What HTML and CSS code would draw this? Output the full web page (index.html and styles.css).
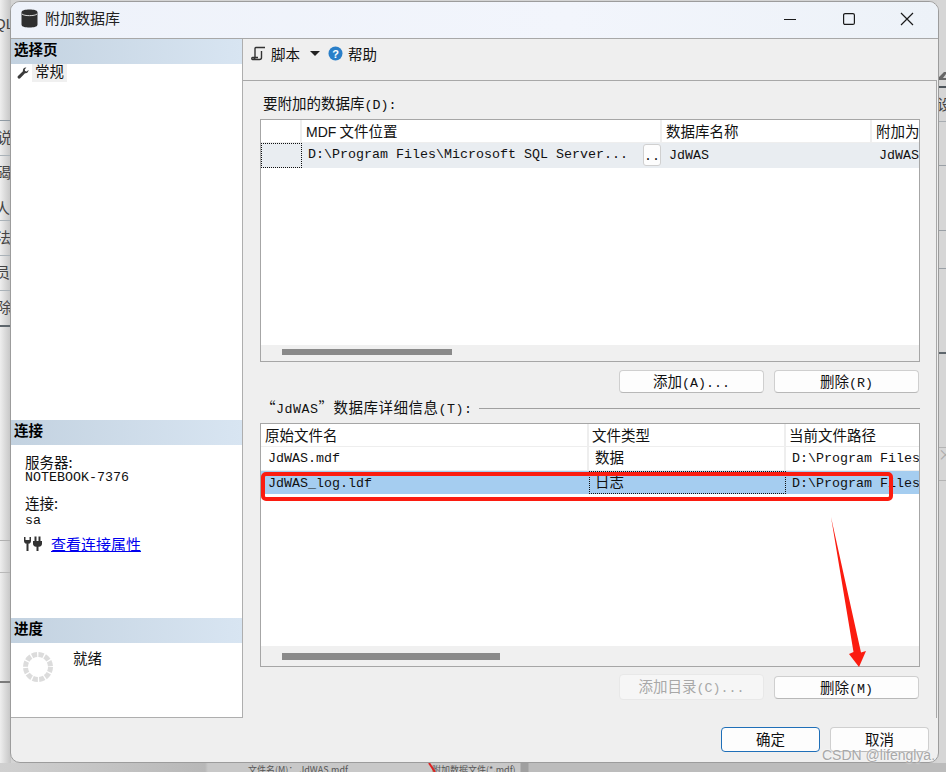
FILE: index.html
```html
<!DOCTYPE html>
<html lang="zh-CN">
<head>
    <meta charset="UTF-8">
    <title>附加数据库</title>
    <link rel="stylesheet" href="styles.css">
</head>
<body>
    <div id="desk">
        <div class="desk-left">
            <span class="frag frag-ql">QL</span>
            <span class="frag frag-l1">说</span>
            <span class="frag frag-l2">碣</span>
            <span class="frag frag-l3">人)</span>
            <span class="frag frag-l4">法</span>
            <span class="frag frag-l5">员</span>
            <span class="frag frag-l6">除</span>
        </div>
        <div class="desk-right">
            <svg class="desk-icon" width="9" height="15" viewBox="0 0 9 15"><path d="M1 10L7 4H9V6L6 10H9V12H1Z" fill="#666"/></svg>
            <span class="frag frag-r1">设</span>
            <span class="frag frag-r2">×</span>
        </div>
        <div class="desk-bottom">
            <span class="frag-file">文件名(M)： JdWAS.mdf</span>
            <span class="frag-file frag-file2">附加数据文件(*.mdf)</span>
            <svg class="desk-arrow" width="10" height="9" viewBox="0 0 10 9"><path d="M1 0L7 9" stroke="#d22" stroke-width="2"/></svg>
        </div>
    </div>

    <div id="window">
        <div class="titlebar">
            <svg class="db-icon" width="17" height="19" viewBox="0 0 17 19">
                <path d="M0.5 3.5C0.5 1.3 4 0.5 8.5 0.5S16.5 1.3 16.5 3.5V15.5C16.5 17.7 13 18.5 8.5 18.5S0.5 17.7 0.5 15.5Z" fill="#2f2f2f"/>
                <path d="M1 5C3 7.2 14 7.2 16 5" fill="none" stroke="#dcdcdc" stroke-width="1"/>
            </svg>
            <span class="title-text">附加数据库</span>
            <div class="win-controls">
                <svg width="14" height="14" viewBox="0 0 14 14"><path d="M1 7.5H13" stroke="#1a1a1a" stroke-width="1.2"/></svg>
                <svg width="14" height="14" viewBox="0 0 14 14"><rect x="1.6" y="1.6" width="10.8" height="10.8" rx="1.5" fill="none" stroke="#1a1a1a" stroke-width="1.2"/></svg>
                <svg width="14" height="14" viewBox="0 0 14 14"><path d="M1 1L13 13M13 1L1 13" stroke="#1a1a1a" stroke-width="1.2"/></svg>
            </div>
        </div>

        <div class="main">
            <div class="side">
                <div class="side-section sec-pages">
                    <div class="side-head">选择页</div>
                    <div class="page-item">
                        <svg width="12" height="12" viewBox="0 0 12 12"><path d="M11.5 2.8C11.7 4.8 10 6.6 8 6.2L3.2 11.2C2.6 11.8 1.6 11.8 1 11.2C0.4 10.6 0.4 9.7 1 9.1L5.9 4.2C5.5 2.2 7.2 0.3 9.4 0.6L7.7 2.4L8.1 4.1L9.8 4.5Z" fill="#3a3a3a"/></svg>
                        <span class="page-name">常规</span>
                    </div>
                </div>
                <div class="side-section sec-conn">
                    <div class="side-head">连接</div>
                    <div class="conn-info">
                        <div class="conn-line">服务器:</div>
                        <div class="conn-line latin">NOTEBOOK-7376</div>
                        <div class="conn-line conn-gap">连接:</div>
                        <div class="conn-line conn-user latin">sa</div>
                        <div class="conn-link-row">
                            <svg width="20" height="16" viewBox="0 0 20 16">
                                <path d="M1 1V5C1 7 2.5 8 4.5 8C6.5 8 8 7 8 5V1H6.5V4H2.5V1Z" fill="#333"/>
                                <path d="M3.5 8H5.5V15H3.5Z" fill="#333"/>
                                <path d="M10 5H19V8C19 10 17 11 14.5 11C12 11 10 10 10 8Z" fill="#333"/>
                                <path d="M11.5 0.5H13.5V5H11.5ZM15.5 0.5H17.5V5H15.5ZM13.5 11H15.5V15H13.5Z" fill="#333"/>
                            </svg>
                            <a class="conn-link" href="#">查看连接属性</a>
                        </div>
                    </div>
                </div>
                <div class="side-section sec-progress">
                    <div class="side-head">进度</div>
                    <div class="progress-body">
                        <svg class="spinner" width="30" height="30" viewBox="0 0 30 30"><circle cx="15" cy="15" r="12.5" fill="none" stroke="#dcdcdc" stroke-width="5" stroke-dasharray="5.2 1.35"/></svg>
                        <span class="progress-text">就绪</span>
                    </div>
                </div>
            </div>

            <div class="content">
                <div class="toolbar">
                    <svg width="15" height="15" viewBox="0 0 15 15"><path d="M5 1.5H14M5 1.5C4 1.5 4 2.5 4 3V11.5C4 13 3 13.5 1.5 13.5H8.5C10 13.5 10.5 12.5 10.5 11.5V5M1.5 13.5C0.5 13.5 0.5 11.5 1.5 11.5H7" fill="none" stroke="#333" stroke-width="1.4"/></svg>
                    <span class="tool-text">脚本</span>
                    <span class="caret"></span>
                    <svg class="help-icon" width="15" height="15" viewBox="0 0 15 15">
                        <circle cx="7.5" cy="7.5" r="7" fill="#2a7fc9"/>
                        <text x="7.5" y="11.5" text-anchor="middle" class="help-mark">?</text>
                    </svg>
                    <span class="tool-text">帮助</span>
                </div>

                <div class="panel">
                    <div class="field-label">要附加的数据库<span class="latin">(D):</span></div>

                    <div class="grid grid-top">
                        <div class="grid-rows">
                            <div class="row row-head cols-top">
                                <div class="cell"></div>
                                <div class="cell"><span class="head-latin">MDF</span> 文件位置</div>
                                <div class="cell">数据库名称</div>
                                <div class="cell">附加为</div>
                            </div>
                            <div class="row row-soft cols-top">
                                <div class="cell cell-focus"></div>
                                <div class="cell cell-path">
                                    <span class="latin">D:\Program Files\Microsoft SQL Server...</span>
                                    <span class="dots-btn">..</span>
                                </div>
                                <div class="cell"><span class="latin">JdWAS</span></div>
                                <div class="cell"><span class="latin">JdWAS</span></div>
                            </div>
                        </div>
                        <div class="grid-scroll"><div class="thumb thumb-top"></div></div>
                    </div>

                    <div class="btn-row btn-row-top">
                        <button class="btn">添加<span class="latin">(A)...</span></button>
                        <button class="btn">删除<span class="latin">(R)</span></button>
                    </div>

                    <div class="section-title">
                        <span class="section-text">“<span class="latin">JdWAS</span>”数据库详细信息<span class="latin">(T):</span></span>
                        <span class="section-line"></span>
                    </div>

                    <div class="grid grid-bottom">
                        <div class="grid-rows">
                            <div class="row row-head cols-bottom">
                                <div class="cell">原始文件名</div>
                                <div class="cell">文件类型</div>
                                <div class="cell">当前文件路径</div>
                            </div>
                            <div class="row row-plain cols-bottom">
                                <div class="cell"><span class="latin">JdWAS.mdf</span></div>
                                <div class="cell">数据</div>
                                <div class="cell"><span class="latin">D:\Program Files</span></div>
                            </div>
                            <div class="row row-selected cols-bottom">
                                <div class="cell"><span class="latin">JdWAS_log.ldf</span></div>
                                <div class="cell cell-focus">日志</div>
                                <div class="cell"><span class="latin">D:\Program Files</span></div>
                            </div>
                        </div>
                        <div class="grid-scroll scroll-tall"><div class="thumb thumb-bottom"></div></div>
                    </div>

                    <div class="btn-row btn-row-bottom">
                        <button class="btn btn-disabled">添加目录<span class="latin">(C)...</span></button>
                        <button class="btn">删除<span class="latin">(M)</span></button>
                    </div>
                </div>
            </div>
        </div>

        <div class="footer">
            <button class="btn btn-foot btn-default">确定</button>
            <button class="btn btn-foot">取消</button>
        </div>
    </div>

    <!-- red markup drawn over the screenshot -->
    <div id="red-box"></div>
    <svg id="red-arrow" width="40" height="156" viewBox="0 0 40 156">
        <path d="M1 1L23.5 136L19 138L29 151L36 135L31 136.5Z" fill="#fb1c10"/>
    </svg>
    <div id="watermark">CSDN @lifenglya.</div>
</body>
</html>
```

FILE: styles.css
```css
* {
    box-sizing: border-box;
}

html, body {
    margin: 0;
    padding: 0;
    width: 946px;
    height: 772px;
    overflow: hidden;
}

body {
    position: relative;
    background-color: #d4d4d4;
    font-family: "Noto Sans CJK SC", "Liberation Sans", sans-serif;
    font-size: 14.5px;
    color: #111;
}

.latin {
    font-family: "Liberation Mono", "Noto Sans CJK SC", monospace;
    font-size: 13.33px;
}

/* background behind the dialog */
#desk {
    position: absolute;
    inset: 0;
    overflow: hidden;
}

.desk-left {
    position: absolute;
    left: 0;
    top: 0;
    width: 11px;
    height: 772px;
    overflow: hidden;
    background-color: #dcdcdc;
    background-image:
        linear-gradient(#8f9aa3, #8f9aa3),
        linear-gradient(#aab2b8, #aab2b8),
        linear-gradient(#aab2b8, #aab2b8),
        linear-gradient(#aab2b8, #aab2b8),
        linear-gradient(#aab2b8, #aab2b8),
        linear-gradient(#5e666c, #5e666c),
        linear-gradient(#b0b0b0, #b0b0b0),
        linear-gradient(#b8b8b8, #b8b8b8),
        linear-gradient(#7a7a7a, #7a7a7a),
        linear-gradient(90deg, #eeeeee, #c4c4c4);
    background-size: 100% 1px, 100% 1px, 100% 1px, 100% 1px, 100% 1px, 100% 2px, 100% 1px, 100% 1px, 100% 2px, 100% 100%;
    background-position: 0 120px, 0 155px, 0 220px, 0 255px, 0 290px, 0 325px, 0 540px, 0 572px, 0 681px, 0 0;
    background-repeat: no-repeat;
}

.desk-right {
    position: absolute;
    right: 0;
    top: 0;
    width: 9px;
    height: 772px;
    overflow: hidden;
    background-color: #d6d6d6;
    background-image:
        linear-gradient(#4e565c, #4e565c),
        linear-gradient(#a8adb2, #a8adb2),
        linear-gradient(#9aa0a6, #9aa0a6),
        linear-gradient(#9aa0a6, #9aa0a6),
        linear-gradient(#9aa0a6, #9aa0a6),
        linear-gradient(#5e666c, #5e666c),
        linear-gradient(#b4b4b4, #b4b4b4),
        linear-gradient(#b4b4b4, #b4b4b4);
    background-size: 100% 2px, 100% 1px, 100% 1px, 100% 1px, 100% 1px, 100% 2px, 100% 1px, 100% 1px;
    background-position: 0 86px, 0 121px, 0 165px, 0 230px, 0 268px, 0 352px, 0 447px, 0 480px;
    background-repeat: no-repeat;
}

.desk-icon {
    position: absolute;
    left: 0;
    top: 68px;
}

.desk-bottom {
    position: absolute;
    left: 0;
    top: 763px;
    width: 946px;
    height: 9px;
    background: linear-gradient(90deg, #d0d0d0, #b8b8b8 205px, #c8c8c8 208px, #c8c8c8 520px, #a0a0a0 521px, #a0a0a0 528px, #bcbcbc 529px);
    overflow: hidden;
}

.desk-arrow {
    position: absolute;
    left: 428px;
    top: 0;
}

.frag {
    position: absolute;
    font-size: 15px;
    line-height: 16px;
    color: #444;
}

.frag-ql { top: 16px; left: -6px; font-family: "Liberation Sans", sans-serif; }
.frag-l1 { top: 129px; left: -3px; }
.frag-l2 { top: 164px; left: -4px; }
.frag-l3 { top: 200px; left: -5px; }
.frag-l4 { top: 229px; left: -4px; }
.frag-l5 { top: 264px; left: -5px; }
.frag-l6 { top: 299px; left: -3px; }
.frag-r1 { top: 96px; left: 0; }
.frag-r2 { top: 446px; left: 1px; color: #aaa; }

.frag-file {
    position: absolute;
    left: 248px;
    top: 1px;
    font-size: 9px;
    line-height: 12px;
    color: #555;
    white-space: nowrap;
}

.frag-file2 {
    left: 432px;
}

/* dialog */
#window {
    position: absolute;
    left: 10px;
    top: 1px;
    width: 929px;
    height: 762px;
    display: flex;
    flex-direction: column;
    background-color: #efefef;
    border: 1px solid #9c9c9c;
    border-radius: 10px;
    overflow: hidden;
}

.titlebar {
    height: 37px;
    flex: none;
    display: flex;
    align-items: center;
    padding: 0 0 3px 10px;
    background: linear-gradient(90deg, #eef2fa, #f2f5fc 60%, #edf2f8);
    border-bottom: 1px solid #a8a8a8;
}

.title-text {
    margin: -3px 0 0 7px;
    font-size: 15px;
    color: #222;
}

.win-controls {
    margin-left: auto;
    margin-right: 24px;
    display: flex;
    gap: 44.5px;
}

.main {
    height: 679px;
    flex: none;
    display: flex;
}

.side {
    width: 232px;
    flex: none;
    display: flex;
    flex-direction: column;
    background-color: #fff;
    border-right: 1px solid #aeaeae;
    border-bottom: 1px solid #aeaeae;
}

.side-section {
    flex: none;
}

.sec-pages { height: 381px; }
.sec-conn { height: 198px; }
.sec-progress { flex: 1; }

.side-head {
    height: 25px;
    line-height: 20px;
    padding-left: 3px;
    font-weight: 700;
    color: #000;
    background: linear-gradient(90deg, #c3d2e0, #d8e5f2);
}

.page-item {
    height: 18px;
    display: flex;
    align-items: center;
    padding-left: 6px;
}

.page-name {
    margin-left: 3px;
    padding: 0 3px;
    height: 18px;
    line-height: 14px;
    background-color: #f0f0f0;
}

.conn-info {
    padding: 9px 0 0 14px;
}

.conn-line {
    height: 16px;
    line-height: 16px;
}

.conn-gap {
    margin-top: 9px;
}

.conn-user {
    margin-top: 2px;
}

.conn-link-row {
    margin-top: 6px;
    margin-left: -2px;
    display: flex;
    align-items: center;
    gap: 8px;
}

.conn-link {
    color: #0000ee;
    font-size: 15px;
    line-height: 17px;
}

.progress-body {
    display: flex;
    padding: 9px 0 0 12px;
}

.spinner {
    flex: none;
}

.progress-text {
    margin-left: 20px;
    margin-top: -4px;
    line-height: 20px;
}

.content {
    flex: 1;
    display: flex;
    flex-direction: column;
    min-width: 0;
    padding-right: 1px;
}

.toolbar {
    height: 41px;
    flex: none;
    display: flex;
    align-items: center;
    padding: 0 0 12px 8px;
    gap: 5px;
}

.tool-text {
    line-height: 20px;
}

.caret {
    margin-left: 5px;
    width: 0;
    height: 0;
    border-left: 5px solid transparent;
    border-right: 5px solid transparent;
    border-top: 5px solid #222;
}

.help-icon {
    margin-left: 3px;
}

.help-mark {
    font-family: "Liberation Sans", sans-serif;
    font-size: 11px;
    font-weight: 700;
    fill: #fff;
}

.panel {
    flex: 1;
    padding: 13px 16px 0 17px;
    border-top: 1px solid #a8a8a8;
    border-right: 1px solid #a8a8a8;
}

.field-label {
    height: 20px;
    line-height: 18px;
    margin: 0 0 5px 3px;
}

.grid {
    display: flex;
    flex-direction: column;
    border: 1px solid #a6a6a6;
    background-color: #fff;
}

.grid-top { height: 243px; }
.grid-bottom { height: 244px; }

.grid-rows {
    flex: 1;
    overflow: hidden;
}

.grid-scroll {
    height: 16px;
    flex: none;
    padding: 4px 0 0 21px;
    background-color: #f0f0f0;
}

.scroll-tall {
    height: 20px;
    padding-top: 7px;
}

.thumb {
    height: 6px;
    background-color: #8a8a8a;
}

.thumb-top { width: 170px; }
.thumb-bottom { width: 218px; height: 7px; }

.row {
    display: grid;
    height: 24px;
}

.cols-top { grid-template-columns: 41px 360px 210px 1fr; }
.cols-bottom { grid-template-columns: 328px 197px 1fr; }

.row-head {
    height: 23px;
    border-bottom: 1px solid #eeeeee;
}

.row-head .cell {
    padding-left: 4px;
    border-right: 2px solid #eeeeee;
}

.row-head .cell:last-child {
    border-right: none;
}

.cols-top.row-head .cell:first-child {
    padding-left: 0;
}

.head-latin {
    font-family: "Liberation Sans", sans-serif;
    font-size: 14px;
}

.cell {
    padding-left: 7px;
    white-space: nowrap;
    overflow: hidden;
    line-height: 22px;
}

.cols-bottom .cell + .cell {
    padding-left: 6px;
}

.row-head.cols-bottom .cell + .cell {
    padding-left: 3px;
}

.row-soft {
    height: 25px;
    background-color: #e9edf1;
}

.row-soft .cell {
    line-height: 20px;
}

.row-plain .cell {
    line-height: 20px;
    border-right: 2px solid #eeeeee;
    border-bottom: 1px solid #eeeeee;
}

.row-plain .cell:last-child {
    border-right: none;
}

.row-plain .latin {
    vertical-align: 1px;
}

.row-selected {
    height: 23px;
    background-color: #a5cdf0;
}

.row-selected .cell {
    line-height: 20px;
}

.cell-focus {
    outline: 1px dotted #111;
    outline-offset: -1px;
}

.row-soft .cell-path {
    display: flex;
    align-items: center;
    justify-content: space-between;
    padding-left: 6px;
    padding-right: 1px;
    padding-bottom: 2px;
}

.row-soft .dots-btn {
    width: 18px;
    height: 22px;
    line-height: 24px;
    text-align: center;
    font-family: "Liberation Mono", monospace;
    font-size: 13.33px;
    background-color: #fdfdfd;
    border: 1px solid #d0d0d0;
    border-radius: 3px;
}

.btn-row {
    display: flex;
    justify-content: flex-end;
    align-items: center;
    gap: 10px;
    padding-right: 1px;
}

.btn-row-top {
    margin-top: 8px;
}

.btn-row-bottom {
    margin-top: 7px;
    height: 26px;
}

.btn {
    width: 145px;
    height: 23px;
    padding: 0;
    font-family: inherit;
    font-size: 14.5px;
    line-height: 20px;
    color: #111;
    background-color: #fdfdfd;
    border: 1px solid #cfcfcf;
    border-bottom-color: #b8b8b8;
    border-radius: 4px;
}

.btn-disabled {
    height: 26px;
    color: #a8a8a8;
    background-color: #f6f6f6;
    border-color: #e8e8e8;
}

.section-title {
    height: 20px;
    line-height: 20px;
    margin: 5px 0 5px 1px;
    display: flex;
    align-items: center;
    gap: 6px;
    white-space: nowrap;
}

.section-text {
    letter-spacing: 0.5px;
}

.section-line {
    flex: 1;
    height: 1px;
    background-color: #a0a0a0;
}

.footer {
    flex: 1;
    display: flex;
    justify-content: flex-end;
    align-items: flex-start;
    gap: 10px;
    padding: 9px 9px 0 0;
}

.btn-foot {
    width: 99px;
    height: 25px;
    padding-bottom: 2px;
}

.btn-default {
    border: 1.5px solid #1f6fb8;
}

/* annotation layer */
#red-box {
    position: absolute;
    left: 261px;
    top: 472px;
    width: 632px;
    height: 29px;
    border: 4px solid #fb1c10;
    border-radius: 5px;
}

#red-arrow {
    position: absolute;
    left: 830px;
    top: 516px;
}

#watermark {
    position: absolute;
    left: 822px;
    top: 746px;
    font-family: "Liberation Sans", sans-serif;
    font-size: 14px;
    line-height: 18px;
    color: #a8a8a8;
    text-shadow: 0 0 2px #fff;
    white-space: nowrap;
}
```
